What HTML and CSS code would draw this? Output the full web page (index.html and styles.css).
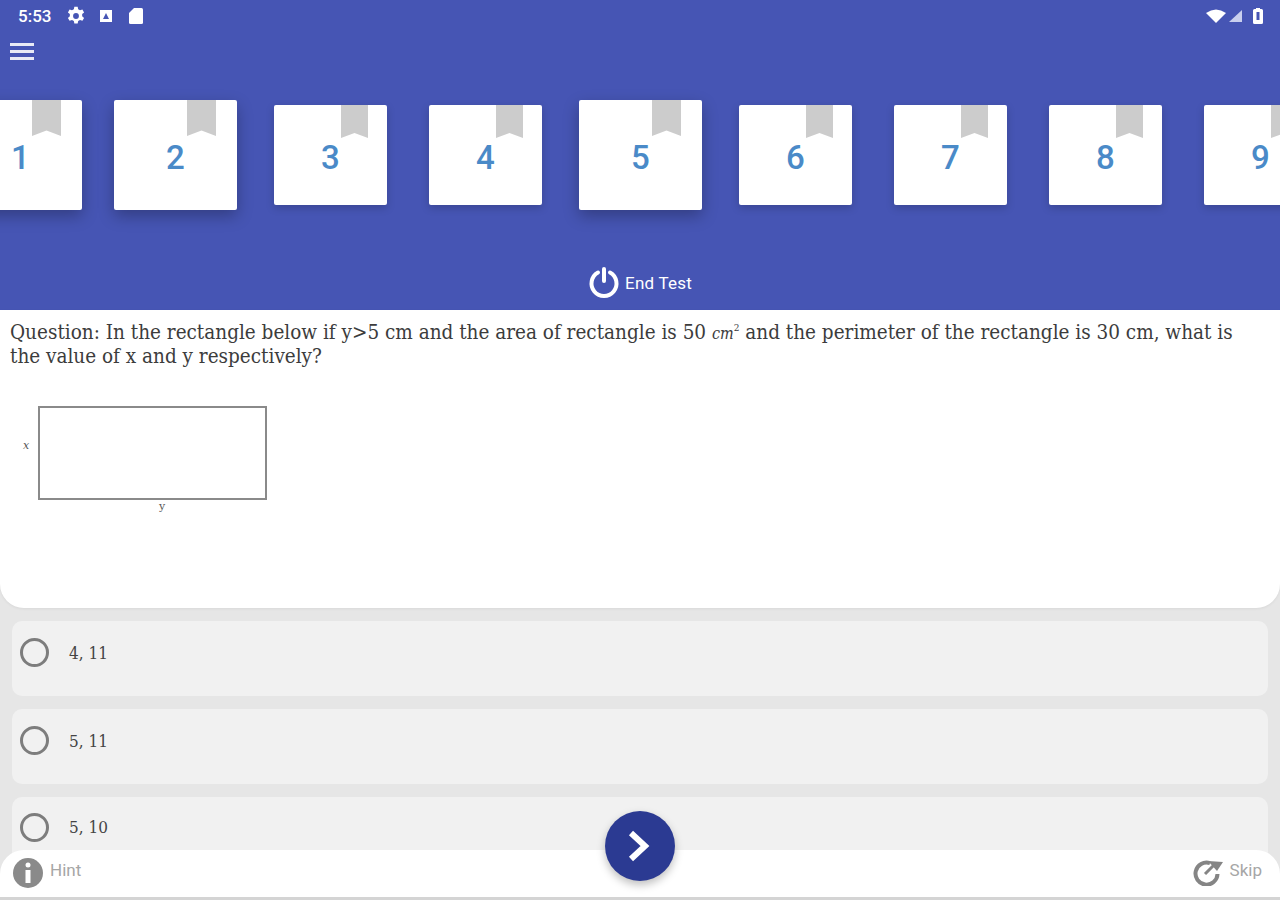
FILE: index.html
```html
<!DOCTYPE html>
<html lang="en">
<head>
    <meta charset="UTF-8">
    <title>Test | Question 5</title>
    <link rel="stylesheet" href="styles.css">
</head>
<body>
    <div class="app">
        <header class="header">
            <div class="status-bar">
                <span class="status-time">5:53</span>
                <svg class="status-icon" viewBox="0 0 24 24" width="20" height="20"><path fill="#fff" fill-rule="evenodd" d="M10 1h4l.6 3 2.200 1.200 2.900-1 2 3.500-2.300 2v2.600l2.300 2-2 3.500-2.900-1-2.200 1.200-.6 3h-4l-.6-3-2.200-1.200-2.900 1-2-3.500 2.300-2v-2.600l-2.300-2 2-3.500 2.900 1L9.400 4zM12 8.500a3.500 3.500 0 1 0 0 7 3.500 3.500 0 0 0 0-7z"/></svg>
                <svg class="status-icon" viewBox="0 0 16 16" width="16" height="16"><path fill="#fff" fill-rule="evenodd" d="M2 2h12v12H2zM8 5l-3 6h6z"/></svg>
                <svg class="status-icon status-sd" viewBox="0 0 16 18" width="16" height="18"><path fill="#fff" d="M6 1h7.500a1.500 1.500 0 0 1 1.500 1.500v13a1.500 1.500 0 0 1-1.500 1.500h-11A1.500 1.500 0 0 1 1 15.500V6z"/></svg>
                <div class="status-right">
                    <svg viewBox="0 0 20 14" width="20" height="14"><path fill="#fff" d="M0 4Q10-3 20 4L10 14z"/></svg>
                    <svg viewBox="0 0 14 14" width="14" height="14"><path fill="#c9cfee" d="M14 1v12H1z"/></svg>
                    <svg class="battery" viewBox="0 0 10 16" width="10" height="16"><path fill="#fff" fill-rule="evenodd" d="M1.500 1H3V0h4v1h1.500A1.500 1.500 0 0 1 10 2.500v12A1.500 1.500 0 0 1 8.500 16h-7A1.500 1.500 0 0 1 0 14.500v-12A1.500 1.500 0 0 1 1.500 1zM3.500 4v8h3V4z"/></svg>
                </div>
            </div>
            <div class="menu-btn"><span></span><span></span><span></span></div>
            <div class="card-row">
                <div class="slot"><div class="card active">1</div></div>
                <div class="slot"><div class="card active">2</div></div>
                <div class="slot"><div class="card">3</div></div>
                <div class="slot"><div class="card">4</div></div>
                <div class="slot"><div class="card active">5</div></div>
                <div class="slot"><div class="card">6</div></div>
                <div class="slot"><div class="card">7</div></div>
                <div class="slot"><div class="card">8</div></div>
                <div class="slot"><div class="card">9</div></div>
            </div>
            <div class="end-test">
                <svg viewBox="0 0 32 32" width="32" height="32"><path fill="none" stroke="#fff" stroke-width="4" stroke-linecap="round" d="M10 6.500a12.500 12.500 0 1 0 12 0"/><path fill="none" stroke="#fff" stroke-width="4" stroke-linecap="round" d="M16 3v12"/></svg>
                <span>End Test</span>
            </div>
        </header>

        <section class="question">
            <p class="question-text">Question: In the rectangle below if y&gt;5 cm and the area of rectangle is 50 <i class="unit">cm</i><sup>2</sup> and the perimeter of the rectangle is 30 cm, what is the value of x and y respectively?</p>
            <div class="figure">
                <span class="figure-x">x</span>
                <div class="figure-box">
                    <div class="figure-rect"></div>
                    <span class="figure-y">y</span>
                </div>
            </div>
        </section>

        <section class="options">
            <div class="option"><span class="radio"></span><span>4, 11</span></div>
            <div class="option"><span class="radio"></span><span>5, 11</span></div>
            <div class="option"><span class="radio"></span><span>5, 10</span></div>
        </section>
    </div>

    <footer class="bottom-bar">
        <div class="bottom-action">
            <svg viewBox="0 0 30 30" width="30" height="30"><circle cx="15" cy="15" r="15" fill="#8a8a8a"/><circle cx="15" cy="7" r="2.500" fill="#fff"/><rect x="12.500" y="12" width="5" height="13" fill="#fff"/></svg>
            <span>Hint</span>
        </div>
        <div class="bottom-action">
            <svg viewBox="0 0 30 28" width="30" height="28"><path fill="none" stroke="#858585" stroke-width="4" d="M17 5.200A11 11 0 1 0 24.500 16"/><path fill="none" stroke="#858585" stroke-width="3" d="M12 16l9-9"/><path fill="#858585" d="M15 3l15 1-6 9z"/></svg>
            <span>Skip</span>
        </div>
    </footer>
    <div class="next-btn">
        <svg viewBox="0 0 30 36" width="30" height="36"><path fill="none" stroke="#fff" stroke-width="6" d="M6 5l14 13L6 31"/></svg>
    </div>
</body>
</html>
```

FILE: styles.css
```css
body {
    margin: 0;
    height: 900px;
    overflow: hidden;
    position: relative;
    background-color: #e6e6e6;
    font-family: Roboto, sans-serif;
}

.header {
    background-color: #4655b4;
    height: 310px;
    color: white;
    display: flex;
    flex-direction: column;
}

.status-bar {
    height: 32px;
    display: flex;
    align-items: center;
    gap: 12px;
    padding: 0 17px 0 18px;
}

.status-time {
    font-size: 17px;
    font-weight: 500;
    margin-right: 3px;
}

.status-sd {
    margin-left: 2px;
}

.status-right {
    margin-left: auto;
    display: flex;
    align-items: center;
    gap: 2px;
}

.battery {
    margin-left: 9px;
}

.menu-btn {
    width: 24px;
    margin: 11px 0 0 10px;
    display: flex;
    flex-direction: column;
    gap: 4px;
}

.menu-btn span {
    height: 3px;
    background: #e8eaf6;
}

.card-row {
    display: flex;
    margin: 40px 0 0 -57px;
    height: 110px;
    align-items: center;
}

.slot {
    flex: 0 0 155px;
    display: flex;
    justify-content: center;
}

.card {
    position: relative;
    flex: none;
    width: 113px;
    height: 100px;
    background: white;
    border-radius: 2px;
    box-shadow: 0 3px 8px rgba(0,0,0,0.18);
    color: #4a8ac8;
    font-size: 33px;
    font-weight: 500;
    display: flex;
    align-items: center;
    justify-content: center;
    padding-top: 5px;
    box-sizing: border-box;
}

.card.active {
    width: 123px;
    height: 110px;
    box-shadow: 0 6px 16px rgba(0,0,0,0.28);
}

.card::before {
    content: "";
    position: absolute;
    top: 0;
    right: 19px;
    width: 27px;
    height: 33px;
    background: #cccccc;
    clip-path: polygon(0 0, 100% 0, 100% 100%, 50% 85%, 0 100%);
}

.card.active::before {
    right: 21px;
    width: 29px;
    height: 36px;
}

.end-test {
    display: flex;
    align-items: center;
    justify-content: center;
    gap: 5px;
    margin-top: 56px;
    font-size: 17px;
    letter-spacing: 0.2px;
}

.end-test span {
    margin-top: 2px;
}

.question {
    background: white;
    height: 298px;
    border-radius: 0 0 24px 24px;
    box-sizing: border-box;
    padding: 10px 20px 0 10px;
    box-shadow: 0 1px 3px rgba(0,0,0,0.06);
}

.question-text {
    margin: 0;
    font-family: "DejaVu Serif Condensed", "DejaVu Serif", serif;
    font-size: 20.5px;
    line-height: 24px;
    color: #3c3c3c;
}

.unit {
    font-size: 16px;
    line-height: 0;
}

.question-text sup {
    font-size: 10px;
    line-height: 0;
}

.figure {
    display: flex;
    margin: 38px 0 0 12px;
    font-family: "DejaVu Serif", serif;
    font-size: 11px;
    color: #555;
}

.figure-x {
    width: 15px;
    padding-left: 1px;
    margin-top: 33px;
    font-style: italic;
}

.figure-box {
    width: 229px;
}

.figure-rect {
    height: 90px;
    border: 2px solid #8a8a8a;
    width: 225px;
}

.figure-y {
    display: block;
    text-align: center;
    margin-left: 19px;
}

.options {
    padding: 13px 12px 0;
    display: flex;
    flex-direction: column;
    gap: 13px;
}

.option {
    height: 75px;
    flex: none;
    background: #f1f1f1;
    border-radius: 10px;
    display: flex;
    align-items: center;
    gap: 20px;
    padding: 0 0 12px 8px;
    box-sizing: border-box;
    font-family: "DejaVu Serif Condensed", "DejaVu Serif", serif;
    font-size: 17px;
    color: #444;
}

.option:last-child {
    padding-bottom: 15px;
}

.radio {
    width: 23px;
    height: 23px;
    border: 3px solid #7d7d7d;
    border-radius: 50%;
}

.bottom-bar {
    position: absolute;
    left: 0;
    right: 0;
    top: 850px;
    height: 50px;
    background: white;
    border-radius: 24px 24px 0 0;
    border-bottom: 3px solid #d4d4d4;
    display: flex;
    justify-content: space-between;
    padding: 8px 18px 0 13px;
    box-sizing: border-box;
    color: #a6a6a6;
    font-size: 17px;
}

.bottom-action {
    display: flex;
    align-items: flex-start;
    gap: 7px;
}

.bottom-action span {
    margin-top: 2px;
}

.next-btn {
    position: absolute;
    left: 605px;
    top: 811px;
    width: 70px;
    height: 70px;
    border-radius: 50%;
    background: #2b3a92;
    box-shadow: 0 4px 8px rgba(0,0,0,0.25);
    display: flex;
    align-items: center;
    justify-content: center;
}
```
